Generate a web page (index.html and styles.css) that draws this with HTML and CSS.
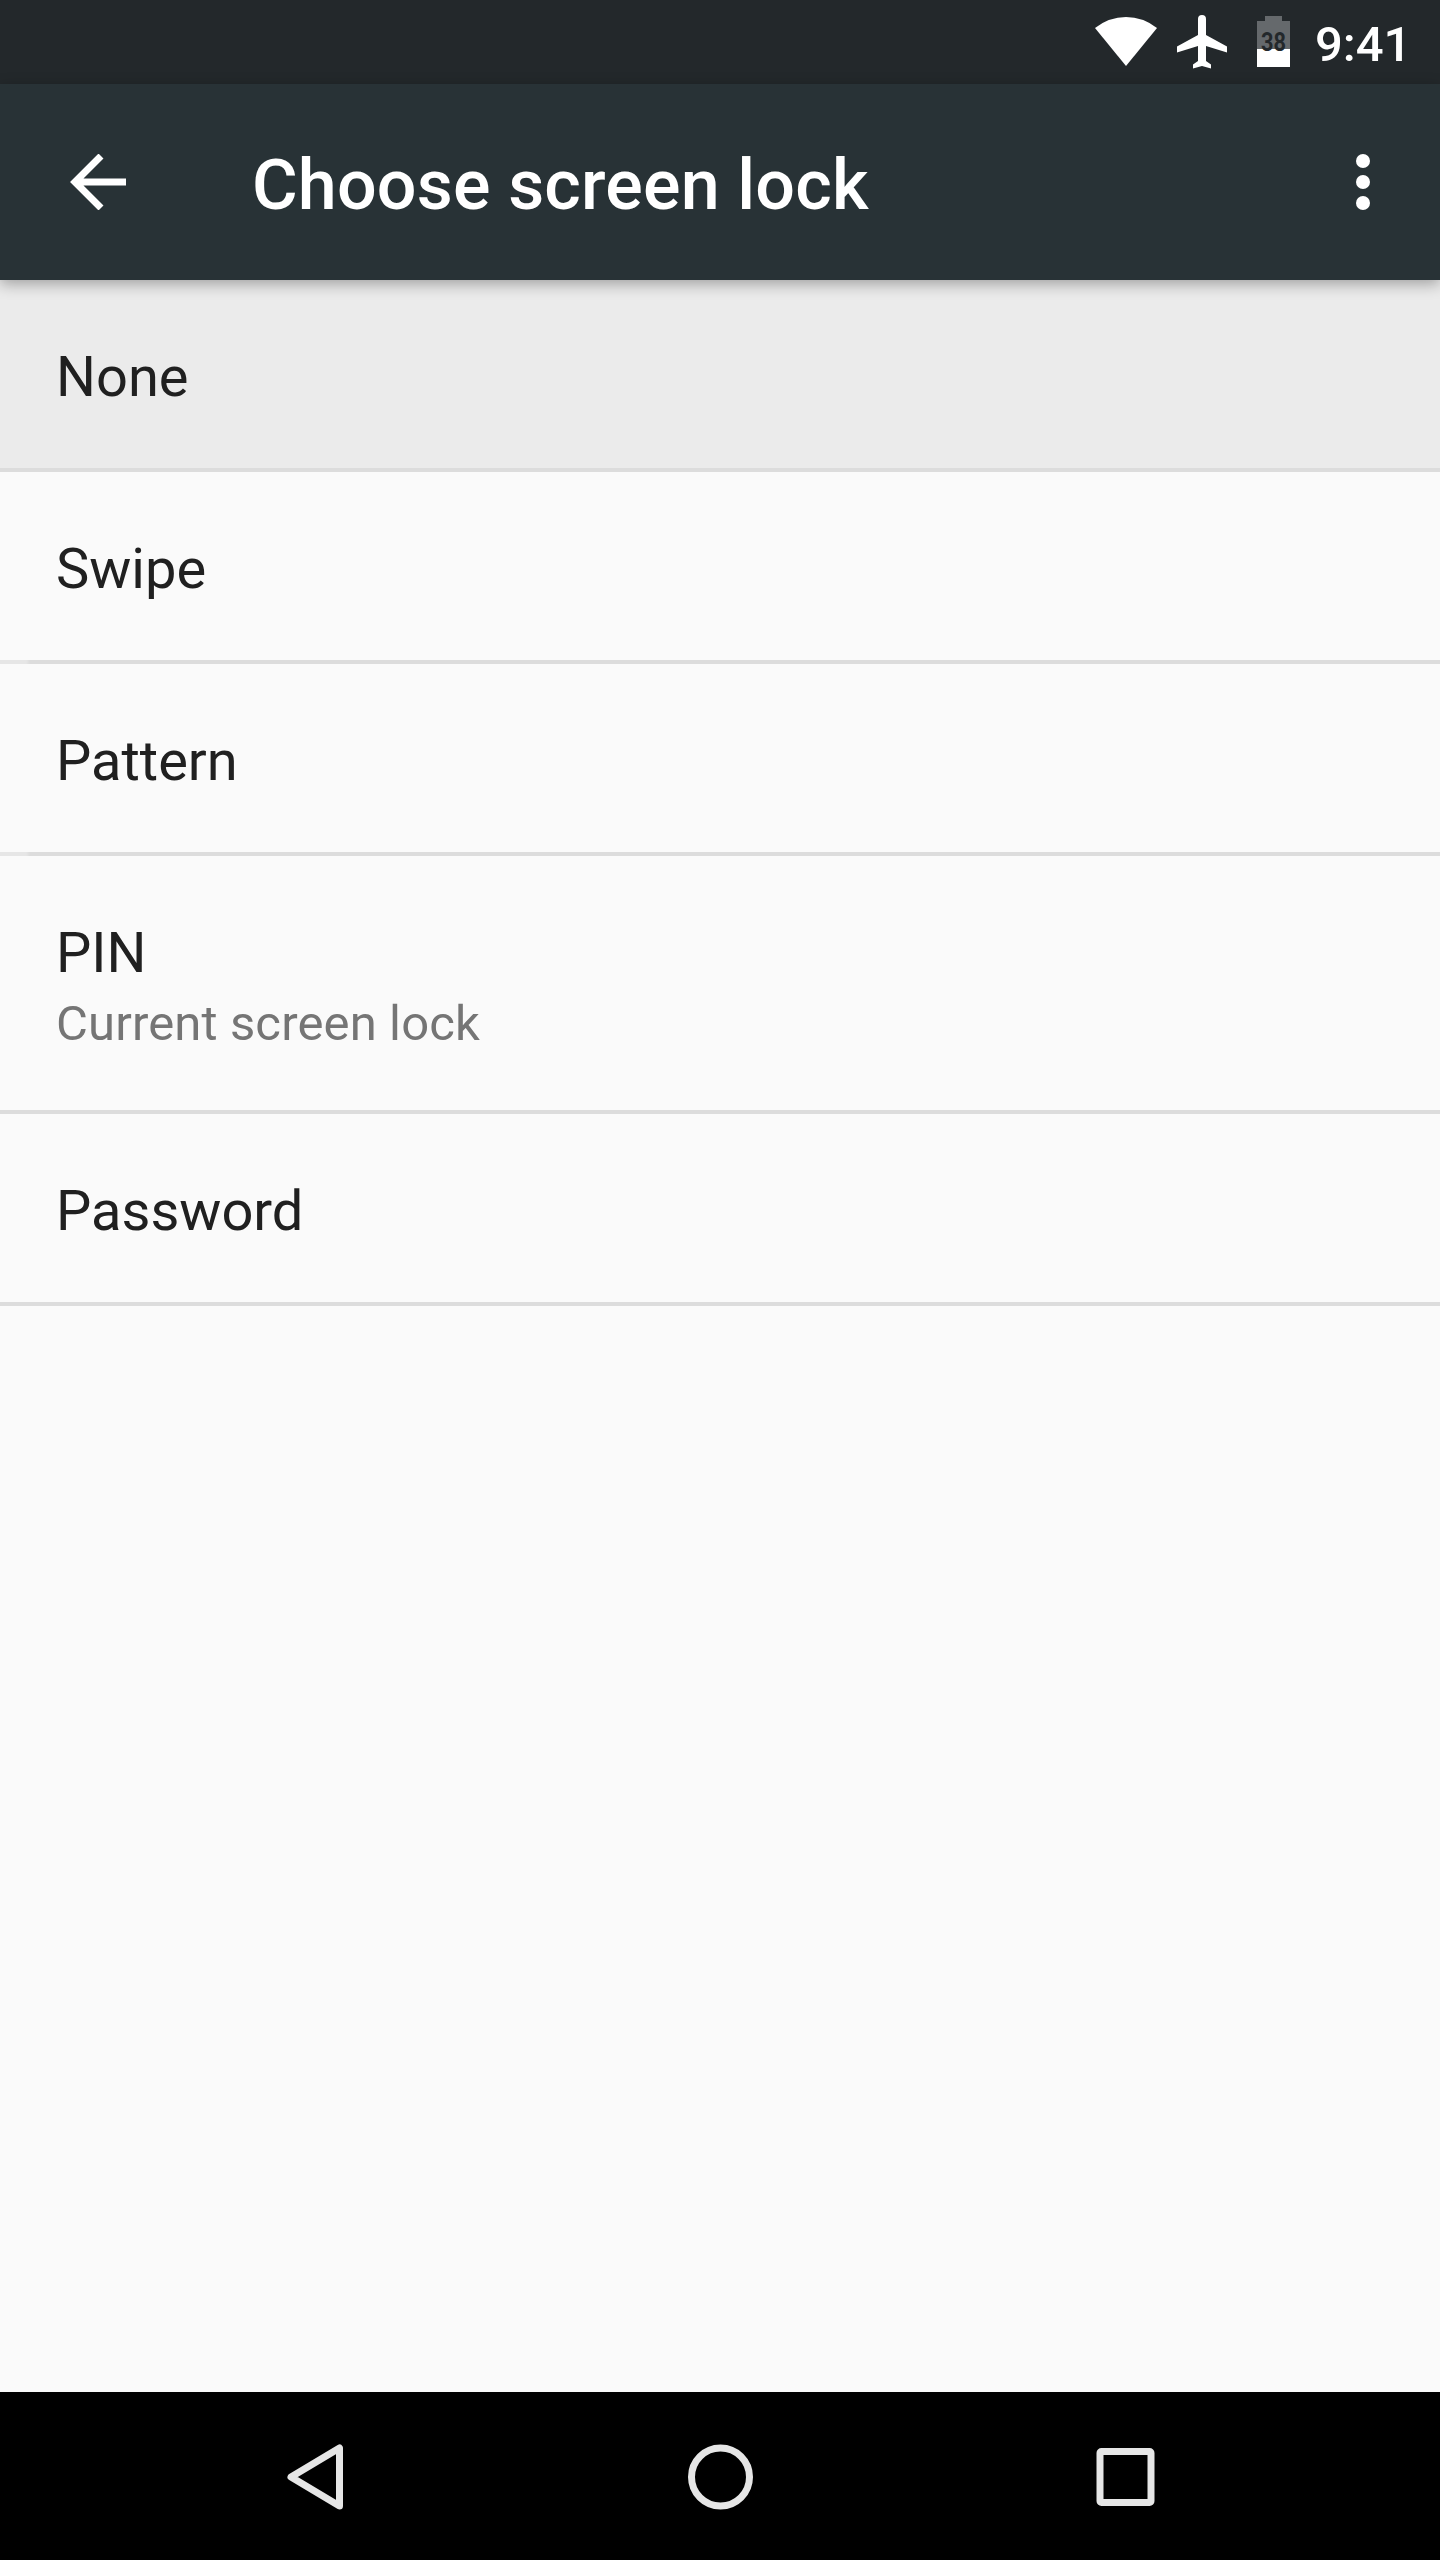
FILE: index.html
```html
<!DOCTYPE html>
<html lang="en">
<head>
  <meta charset="UTF-8">
  <meta name="viewport" content="width=device-width, initial-scale=1.0">
  <title>Choose screen lock</title>
  <link rel="stylesheet" href="styles.css">
</head>
<body>
  <div class="status-bar">
    <svg class="wifi" width="62" height="50" viewBox="0 0 62 50">
      <path d="M31 49L0 11Q14 0 31 0T62 11z" fill="#fff"/>
    </svg>
    <svg class="airplane" width="50" height="54" viewBox="0 0 50 54">
      <path d="M21 4a4 4 0 0 1 8 0V20L50 31.500V37.500L29 31V46L34 49.500V53.500L25 51L16 53.500V49.500L21 46V31L0 37.500V31.500L21 20z" fill="#fff"/>
    </svg>
    <svg class="battery" width="33" height="51" viewBox="0 0 33 51">
      <path d="M8 0h17v5h8v28H0V5h8z" fill="#65696c"/>
      <path d="M0 33h33v18H0z" fill="#fff"/>
      <text x="4" y="34.500" textLength="25" lengthAdjust="spacingAndGlyphs">38</text>
    </svg>
    <span class="time">9:41</span>
  </div>

  <header class="toolbar">
    <svg class="back" width="56" height="56" viewBox="0 0 56 56">
      <path d="M56 28H6M31 2L5 28l26 26" fill="none" stroke="#fff" stroke-width="7"/>
    </svg>
    <h1>Choose screen lock</h1>
    <svg class="more" width="14" height="56" viewBox="0 0 14 56" fill="#fff">
      <circle cx="7" cy="7" r="7"/>
      <circle cx="7" cy="28" r="7"/>
      <circle cx="7" cy="49" r="7"/>
    </svg>
  </header>

  <ul class="list">
    <li class="pressed"><span class="name">None</span></li>
    <li class="faded"><span class="name">Swipe</span></li>
    <li class="faded"><span class="name">Pattern</span></li>
    <li class="two-line">
      <span class="name">PIN</span>
      <span class="summary">Current screen lock</span>
    </li>
    <li><span class="name">Password</span></li>
  </ul>

  <nav class="nav-bar">
    <svg width="66" height="67" viewBox="0 0 66 67">
      <path d="M9 34L57.500 5V63z"/>
    </svg>
    <svg width="66" height="67" viewBox="0 0 66 67">
      <circle cx="33.500" cy="34" r="29"/>
    </svg>
    <svg width="66" height="67" viewBox="0 0 66 67">
      <rect x="8" y="8.500" width="51" height="51" rx="1.500"/>
    </svg>
  </nav>
</body>
</html>
```

FILE: styles.css
```css
* {
  box-sizing: border-box;
}
body {
  margin: 0;
  height: 2560px;
  display: flex;
  flex-direction: column;
  background-color: #fafafa;
  color: #202020;
  font-family: Roboto, sans-serif;
  overflow: hidden;
}
svg {
  display: block;
  flex: none;
}

/* status bar */
.status-bar {
  height: 84px;
  display: flex;
  align-items: flex-start;
  justify-content: flex-end;
  padding-right: 32px;
  background-color: #23282b;
  color: #fff;
}
.wifi {
  margin-top: 17px;
  margin-right: 20px;
}
.airplane {
  margin-top: 15px;
  margin-right: 30px;
}
.battery {
  margin-top: 16px;
  margin-right: 25px;
}
.battery text {
  font-size: 25px;
  font-weight: 700;
  fill: #23282b;
}
.time {
  width: 93px;
  margin-top: 16px;
  font-size: 49px;
  font-weight: 500;
  line-height: 58px;
}

/* toolbar */
.toolbar {
  height: 196px;
  display: flex;
  align-items: center;
  padding: 0 70px;
  background-color: #283236;
  color: #fff;
  box-shadow: 0 4px 14px rgba(0, 0, 0, 0.32);
  z-index: 1;
}
.back {
  margin-right: 126px;
}
.toolbar h1 {
  flex: 1;
  margin: 6px 0 0;
  font-size: 70px;
  font-weight: 500;
  line-height: 82px;
  letter-spacing: 0.17px;
}

/* lock options */
.list {
  flex: 1;
  margin: 0;
  padding: 0;
  list-style: none;
}
.list li {
  height: 192px;
  padding: 64px 56px 0;
  border-bottom: 4px solid #dcdcdc;
}
.list .pressed {
  background-color: #ebebeb;
}
.list .faded {
  border-image: linear-gradient(to right, #e6e6e6 30px, #dcdcdc 34px) 4;
}
.list .two-line {
  height: 258px;
}
.name {
  display: block;
  font-size: 56px;
  line-height: 66px;
}
.summary {
  display: block;
  margin-top: 9px;
  color: #757575;
  font-size: 49px;
  line-height: 58px;
  letter-spacing: 0.13px;
}

/* navigation buttons */
.nav-bar {
  height: 168px;
  display: flex;
  align-items: center;
  justify-content: center;
  gap: 339px;
  background-color: #000;
}
.nav-bar svg {
  fill: none;
  stroke: #e6e6e6;
  stroke-width: 7px;
  stroke-linejoin: round;
}
```
